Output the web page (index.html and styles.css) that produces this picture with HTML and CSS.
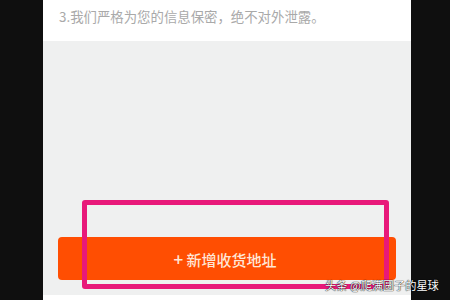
FILE: index.html
```html
<!DOCTYPE html>
<html lang="zh">
<head>
<meta charset="utf-8">
<link rel="stylesheet" href="styles.css">
</head>
<body>
<div class="screen">
  <div class="column">
    <div class="notice">3.我们严格为您的信息保密，绝不对外泄露。</div>
    <div class="panel">
      <button class="add-btn"><span class="plus">+</span> 新增收货地址</button>
    </div>
    <div class="foot"></div>
  </div>
  <div class="highlight"></div>
  <div class="watermark">头条 @爬满圆子的星球</div>
</div>
</body>
</html>
```
FILE: styles.css
```css
html, body {
  margin: 0;
  padding: 0;
  background: #0f0f0f;
}
.screen {
  position: relative;
  width: 450px;
  height: 300px;
  overflow: hidden;
  font-family: "Noto Sans CJK SC", "Liberation Sans", sans-serif;
}
.column {
  margin-left: 43px;
  width: 368px;
  height: 300px;
  display: flex;
  flex-direction: column;
  background: #ffffff;
}
.notice {
  height: 41px;
  box-sizing: border-box;
  padding: 6px 0 0 16px;
  font-size: 13.4px;
  line-height: 20px;
  color: #a9a9a9;
  background: #ffffff;
}
.panel {
  height: 254px;
  background: #eff0f0;
  display: flex;
  flex-direction: column;
  justify-content: flex-end;
  padding: 0 15px 15px;
  box-sizing: border-box;
}
.add-btn {
  height: 43px;
  border: none;
  border-radius: 4px;
  background: #ff4e02;
  color: #ffe6d6;
  font-family: inherit;
  font-size: 15px;
  font-weight: 500;
  padding: 0 4px 0 0;
  letter-spacing: 0;
}
.plus {
  font-size: 17px;
}
.foot {
  flex: 1;
  background: #ffffff;
}
.highlight {
  position: absolute;
  left: 82px;
  top: 200px;
  width: 297px;
  height: 79px;
  border: 5px solid #e8197a;
  border-radius: 3px;
}
.watermark {
  position: absolute;
  left: 325px;
  top: 277px;
  font-size: 11.2px;
  line-height: 16px;
  color: #ffffff;
  text-shadow: 0 0 1px #000, 0 0 1px #000;
  white-space: nowrap;
}
```
